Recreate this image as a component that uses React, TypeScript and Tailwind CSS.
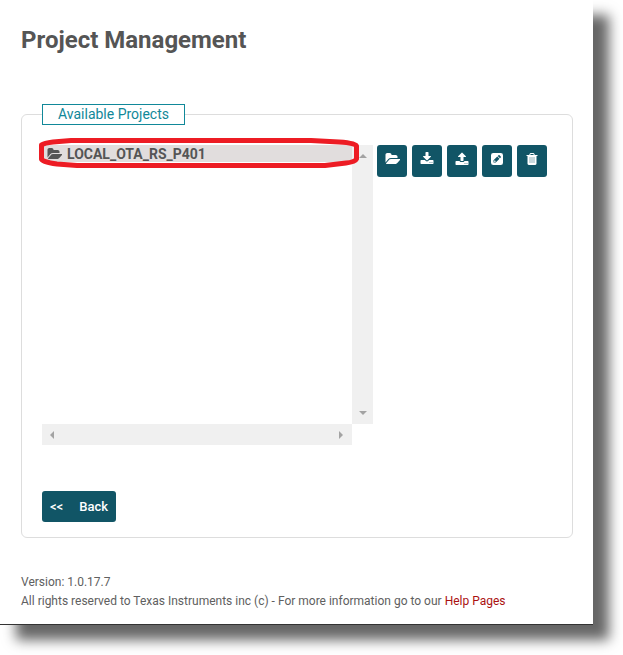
import type { ReactNode } from "react";

type IconProps = { viewBox?: string; className?: string; children: ReactNode };

function Icon({ viewBox = "0 0 1792 1792", className = "h-3.5 w-3.5", children }: IconProps) {
  return (
    <svg viewBox={viewBox} className={className} fill="currentColor" fillRule="evenodd" aria-hidden="true">
      {children}
    </svg>
  );
}

function FolderOpen() {
  return (
    <Icon viewBox="0 0 1920 1792" className="h-3.5 w-[15px] shrink-0">
      <path d="M1943 952q0 31-31 66l-336 396q-43 51-120.5 86.5t-143.5 35.5h-1088q-34 0-60.5-13t-26.5-43q0-31 31-66l336-396q43-51 120.5-86.5t143.5-35.5h1088q34 0 60.5 13t26.5 43zm-343-344v160h-832q-94 0-197 47.5t-164 119.5l-337 396-5 6q0-4-.5-12.5t-.5-12.5v-960q0-92 66-158t158-66h320q92 0 158 66t66 158v32h544q92 0 158 66t66 158z" />
    </Icon>
  );
}

const actions: { label: string; icon: ReactNode }[] = [
  { label: "Open project", icon: <FolderOpen /> },
  {
    label: "Import project",
    icon: (
      <Icon>
        <path d="M1344 1344q0-26-19-45t-45-19-45 19-19 45 19 45 45 19 45-19 19-45zm256 0q0-26-19-45t-45-19-45 19-19 45 19 45 45 19 45-19 19-45zm128-224v320q0 40-28 68t-68 28h-1472q-40 0-68-28t-28-68v-320q0-40 28-68t68-28h465l135 136q58 56 136 56t136-56l136-136h464q40 0 68 28t28 68zm-325-569q17 41-14 70l-448 448q-18 19-45 19t-45-19l-448-448q-31-29-14-70 17-39 59-39h256v-448q0-26 19-45t45-19h256q26 0 45 19t19 45v448h256q42 0 59 39z" />
      </Icon>
    ),
  },
  {
    label: "Export project",
    icon: (
      <Icon>
        <path d="M1344 1472q0-26-19-45t-45-19-45 19-19 45 19 45 45 19 45-19 19-45zm256 0q0-26-19-45t-45-19-45 19-19 45 19 45 45 19 45-19 19-45zm128-224v320q0 40-28 68t-68 28h-1472q-40 0-68-28t-28-68v-320q0-40 28-68t68-28h427q21 56 70.5 92t110.5 36h256q61 0 110.5-36t70.5-92h427q40 0 68 28t28 68zm-325-648q-17 40-59 40h-256v448q0 26-19 45t-45 19h-256q-26 0-45-19t-19-45v-448h-256q-42 0-59-40-17-39 14-69l448-448q18-19 45-19t45 19l448 448q31 30 14 69z" />
      </Icon>
    ),
  },
  {
    label: "Rename project",
    icon: (
      <Icon>
        <path d="M416 128h960a288 288 0 0 1 288 288v960a288 288 0 0 1-288 288H416a288 288 0 0 1-288-288V416a288 288 0 0 1 288-288zM448 1056v288h288l480-480-288-288zM992 512l288 288 92-92q28-28 28-68t-28-68L1220 420q-28-28-68-28t-68 28zM544 1110l76-76v96h96v96l-60 54h-112z" />
      </Icon>
    ),
  },
  {
    label: "Delete project",
    icon: (
      <Icon>
        <rect x="480" y="600" width="832" height="850" opacity="0.55" />
        <path d="M704 1376v-704q0-14-9-23t-23-9h-64q-14 0-23 9t-9 23v704q0 14 9 23t23 9h64q14 0 23-9t9-23zm256 0v-704q0-14-9-23t-23-9h-64q-14 0-23 9t-9 23v704q0 14 9 23t23 9h64q14 0 23-9t9-23zm256 0v-704q0-14-9-23t-23-9h-64q-14 0-23 9t-9 23v704q0 14 9 23t23 9h64q14 0 23-9t9-23zm-544-992h448l-48-117q-7-9-17-11h-317q-10 2-17 11zm928 32v64q0 14-9 23t-23 9h-96v948q0 83-47 143.5t-113 60.5h-832q-66 0-113-58.5t-47-141.5v-952h-96q-14 0-23-9t-9-23v-64q0-14 9-23t23-9h309l70-167q15-37 54-63t79-26h320q40 0 79 26t54 63l70 167h309q14 0 23 9t9 23z" />
      </Icon>
    ),
  },
];

function Arrow({ points }: { points: string }) {
  return (
    <svg viewBox="0 0 8 8" className="h-2 w-2" fill="#a3a3a3" aria-hidden="true">
      <polygon points={points} />
    </svg>
  );
}

function ProjectList() {
  return (
    <div className="relative grid w-[331px] grid-cols-[1fr_21px] grid-rows-[279px_21px]">
      <ul>
        <li className="flex">
          <button
            type="button"
            className="flex h-[17px] w-full items-center gap-[5px] bg-[#e1dddd] pl-[5px] text-left text-sm leading-4 font-bold"
          >
            <FolderOpen />
            LOCAL_OTA_RS_P401
          </button>
        </li>
      </ul>
      <div className="flex flex-col items-center justify-between bg-[#f0f0f0] py-[7px]">
        <Arrow points="0,6 4,2 8,6" />
        <Arrow points="0,2 8,2 4,6" />
      </div>
      <div className="flex items-center justify-between bg-[#f0f0f0] px-[7px]">
        <Arrow points="5,0 5,8 1,4" />
        <Arrow points="2,0 6,4 2,8" />
      </div>
      <svg
        viewBox="0 0 320 30"
        className="pointer-events-none absolute -top-[7px] -left-[3px] h-[30px] w-80"
        fill="none"
        stroke="#ed1c24"
        strokeWidth="5"
        strokeLinejoin="round"
        aria-hidden="true"
      >
        <path d="M2.500 7 Q5 5 14 4 L32 2.500 H272 L300 4 Q317 5 317.500 8 V21 Q316 24 307 25 L286 27.500 H38 L18 26 Q3 24 2.500 21Z" />
      </svg>
    </div>
  );
}

export default function App() {
  return (
    <div className="overflow-hidden bg-white pr-[30px] pb-[30px] font-['Roboto','Liberation_Sans',sans-serif] text-[#555]">
      <main className="border-b border-[#333] bg-white px-5 pt-6 pb-[13px] shadow-[16px_15px_12px_0px_#666]">
        <h1 className="ml-px text-2xl leading-8 font-bold">Project Management</h1>

        <fieldset className="mt-12 ml-px rounded-md border border-[#ddd] px-5 pt-5 pb-[15px]">
          <legend className="h-[21px] border border-[#118899] bg-white px-[15px] text-sm leading-[19px] text-[#118899]">
            Available Projects
          </legend>
          <div className="flex gap-1">
            <ProjectList />
            <div className="flex gap-[5px]">
              {actions.map(({ label, icon }) => (
                <button
                  key={label}
                  type="button"
                  aria-label={label}
                  className="flex h-8 w-[30px] justify-center rounded-[3px] bg-[#115566] pt-[7px] text-white"
                >
                  {icon}
                </button>
              ))}
            </div>
          </div>
          <button
            type="button"
            className="mt-[46px] flex h-[31px] items-center gap-4 rounded-[3px] bg-[#115566] px-2 text-[13px] font-medium text-white"
          >
            <span>&lt;&lt;</span>
            <span>Back</span>
          </button>
        </fieldset>

        <footer className="mt-[35px] ml-px text-xs leading-[19px] text-[#606060]">
          <p>Version: 1.0.17.7</p>
          <p>
            All rights reserved to Texas Instruments inc (c) - For more information go to our{" "}
            <a href="#help" className="text-[#aa1111]">
              Help Pages
            </a>
          </p>
        </footer>
      </main>
    </div>
  );
}
